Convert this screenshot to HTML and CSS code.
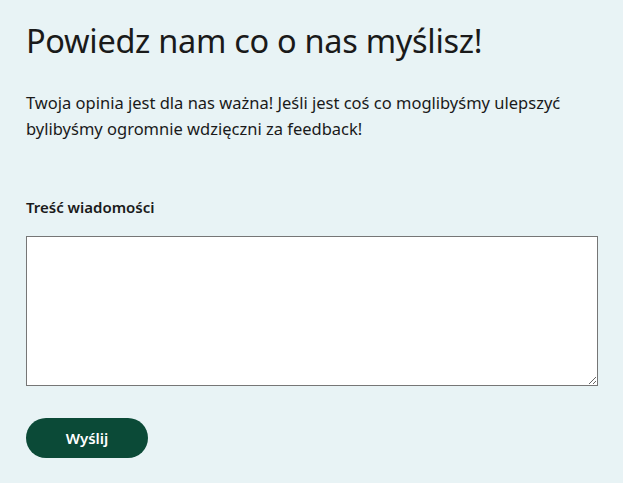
FILE: index.html
```html
<!DOCTYPE html>
<html lang="pl">
<head>
<meta charset="utf-8">
<link rel="stylesheet" href="styles.css">
</head>
<body>
<main class="page">
  <h1 class="title">Powiedz nam co o nas myślisz!</h1>
  <p class="intro">Twoja opinia jest dla nas ważna! Jeśli jest coś co moglibyśmy ulepszyć bylibyśmy ogromnie wdzięczni za feedback!</p>
  <form class="form">
    <label class="label" for="msg">Treść wiadomości</label>
    <textarea class="field" id="msg"></textarea>
    <button class="btn" type="button">Wyślij</button>
  </form>
</main>
</body>
</html>
```
FILE: styles.css
```css
html, body { margin: 0; padding: 0; }
body {
  background: #e8f3f5;
  color: #1a1a1a;
  font-family: "Noto Sans", "Open Sans", sans-serif;
  width: 623px;
  height: 483px;
  overflow: hidden;
}
.page {
  padding: 19px 25px 0 26px;
}
.title {
  margin: 0;
  font-size: 32.5px;
  font-weight: 400;
  line-height: 44px;
  letter-spacing: -0.3px;
}
.intro {
  margin: 27px 0 0;
  font-size: 16.5px;
  line-height: 26px;
  max-width: 555px;
}
.form {
  display: flex;
  flex-direction: column;
  align-items: flex-start;
  margin-top: 54px;
}
.label {
  font-size: 15px;
  font-weight: 600;
  line-height: 22px;
}
.field {
  box-sizing: border-box;
  margin: 18px 0 0;
  width: 572px;
  height: 150px;
  border: 1px solid #767676;
  border-radius: 0;
  background: #fff;
}
.btn {
  margin-top: 32px;
  width: 122px;
  height: 40px;
  border: none;
  border-radius: 20px;
  background: #0b4a37;
  color: #fff;
  font-family: inherit;
  font-size: 15px;
  font-weight: 600;
}
```
